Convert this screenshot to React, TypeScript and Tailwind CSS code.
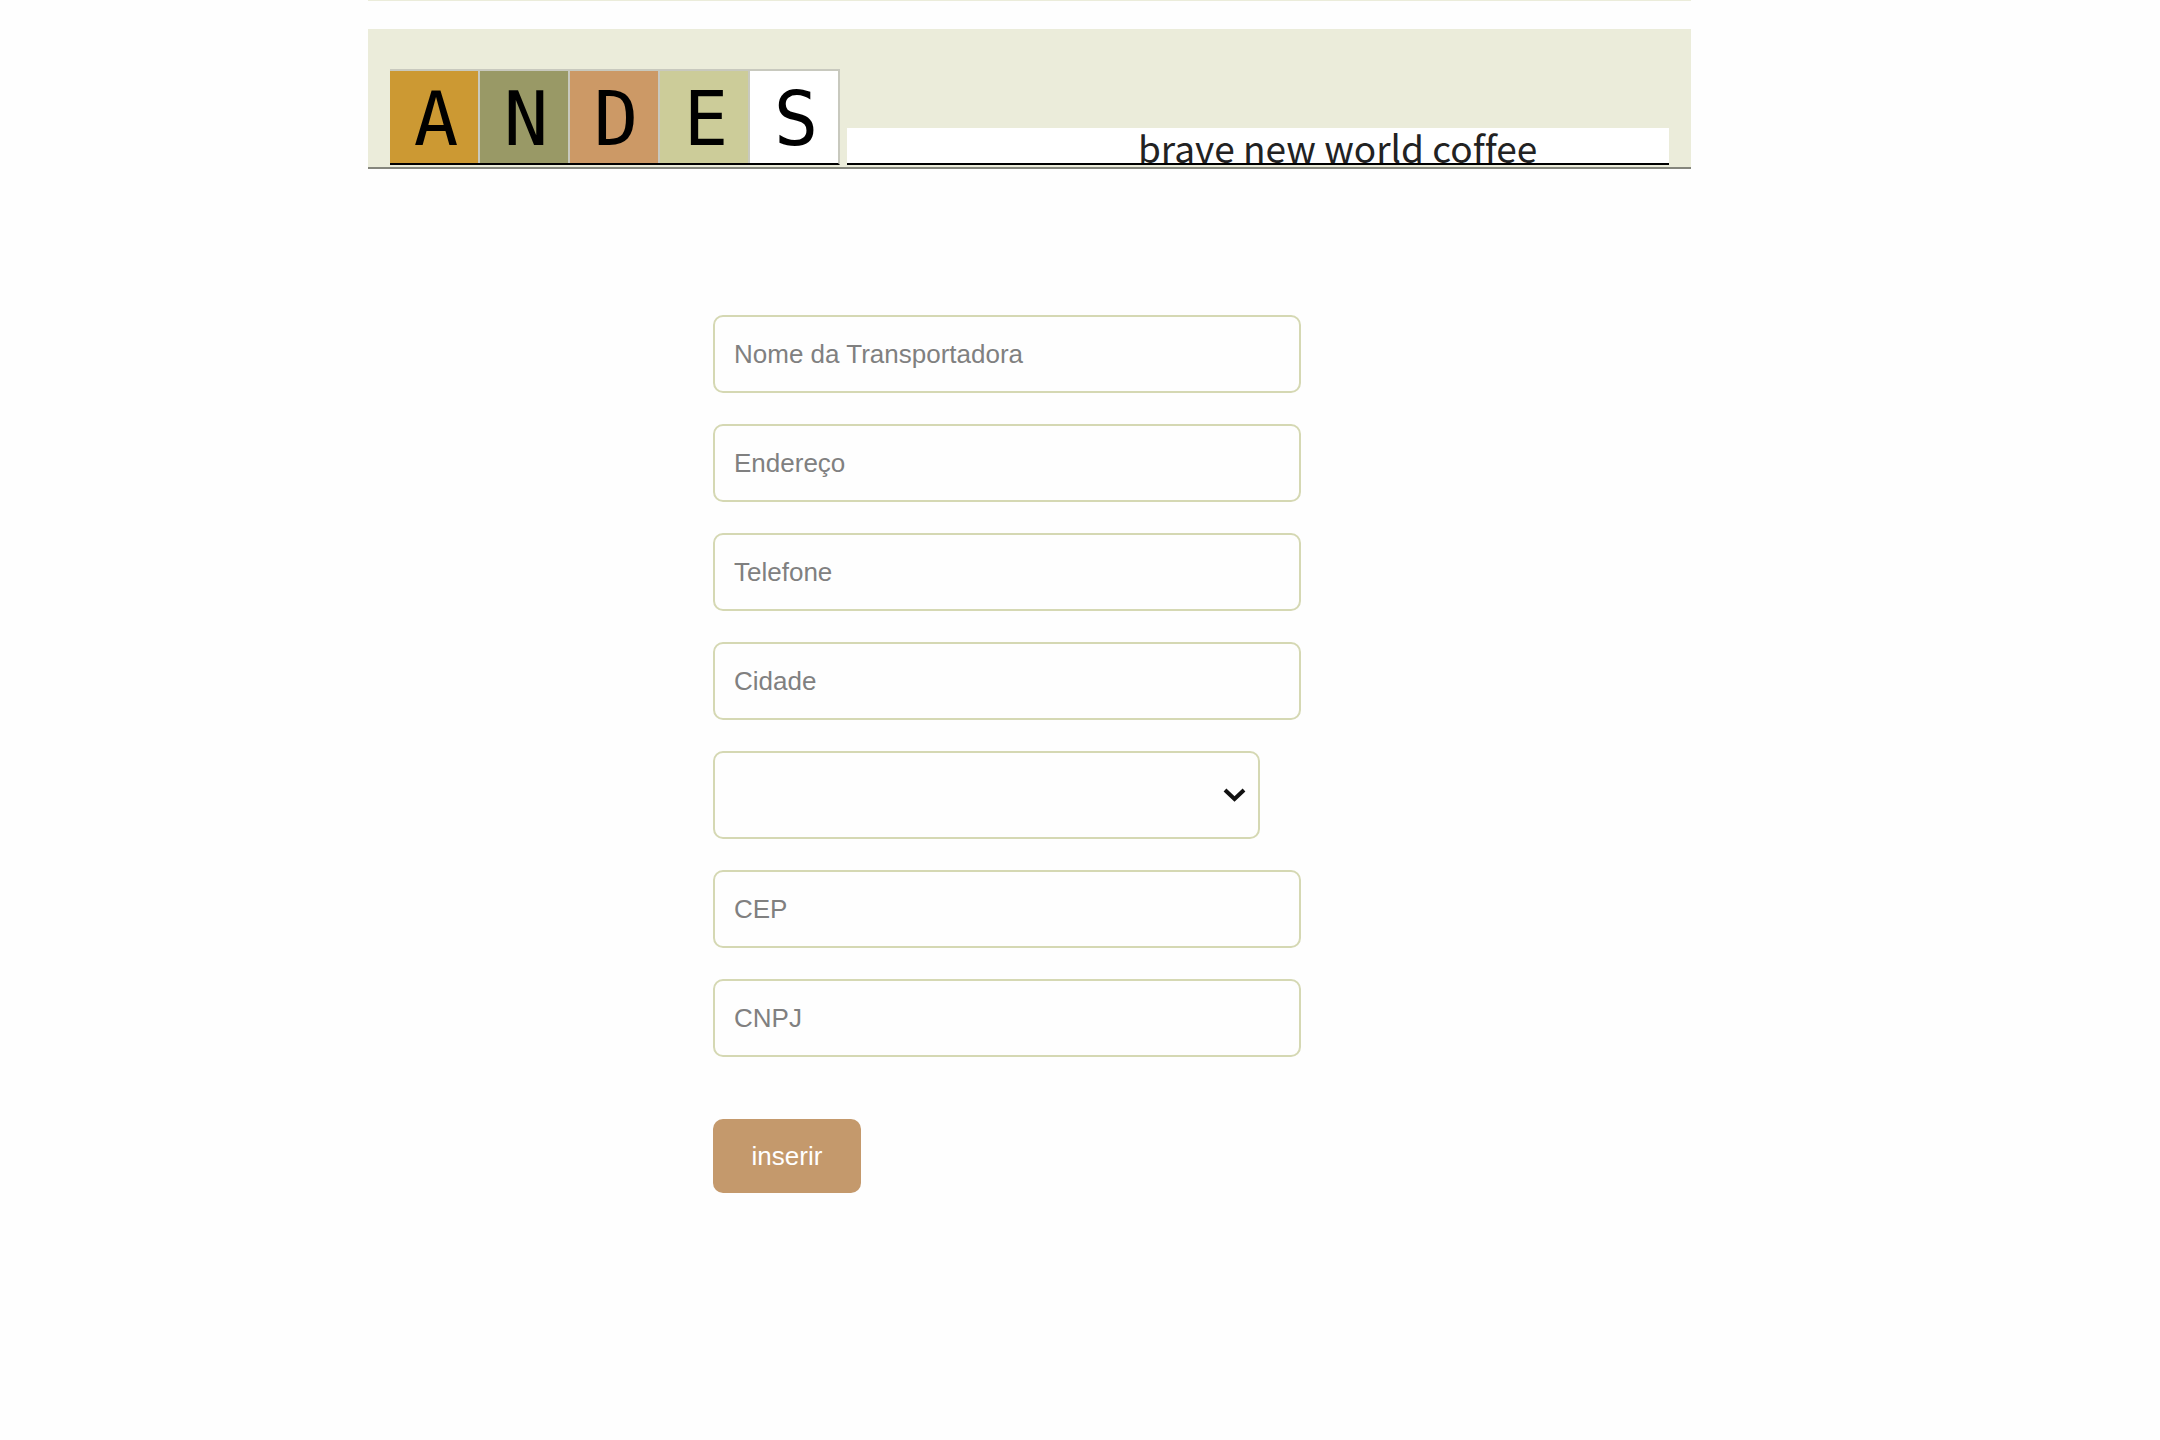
import React from "react";

const tiles = [
  { letter: "A", color: "bg-[#cc9933]" },
  { letter: "N", color: "bg-[#999966]" },
  { letter: "D", color: "bg-[#cc9966]" },
  { letter: "E", color: "bg-[#cccc99]" },
  { letter: "S", color: "bg-white" },
];

const box = "rounded-[10px] border-2 border-[#d5d8b3] bg-[#fefefe]";
const field =
  "h-[78px] w-full px-[19px] text-[26px] text-[#333333] placeholder:text-[#808080] placeholder:opacity-100";

function Field({ name, label }: { name: string; label: string }) {
  return <input type="text" name={name} aria-label={label} placeholder={label} className={`${box} ${field}`} />;
}

function Header() {
  return (
    <header className="flex items-end border-b-2 border-[#85867c] bg-[#ebecda] px-[22px] pt-10">
      <h1 className="mb-0.5 flex gap-0.5 border-t-2 border-r-2 border-b-2 border-t-[#c8c9be] border-r-[#c8c9be] border-b-black bg-[#c8c9be] font-['DejaVu_Sans_Mono',monospace] text-[74px] leading-none text-black">
        {tiles.map((tile) => (
          <span key={tile.letter} className={`flex h-[92px] w-[88px] items-center justify-center pt-1 pl-1 ${tile.color}`}>
            {tile.letter}
          </span>
        ))}
      </h1>
      <p className="mb-0.5 ml-[7px] h-[37px] flex-1 border-b-2 border-black bg-white pl-[291px] font-['Noto_Sans_CJK_JP',sans-serif] text-[37px] leading-[38px] whitespace-nowrap text-[#222222] [font-variant-ligatures:none]">
        brave new world coffee
      </p>
    </header>
  );
}

export default function App() {
  return (
    <div className="grid min-h-screen grid-cols-[368fr_1323fr_469fr] bg-[#fefefe] font-['Liberation_Sans',Arial,sans-serif]">
      <main className="col-start-2">
        <div className="mb-7 h-px bg-[#ebecda]" />
        <Header />
        <form className="mt-[146px] ml-[345px] flex max-w-[588px] flex-col items-start gap-[31px]">
          <Field name="nome" label="Nome da Transportadora" />
          <Field name="endereco" label="Endereço" />
          <Field name="telefone" label="Telefone" />
          <Field name="cidade" label="Cidade" />
          <div className="relative w-full max-w-[547px]">
            <select name="estado" aria-label="Estado" className={`${box} block h-22 w-full appearance-none px-[19px] text-[26px]`}>
              <option value=""></option>
            </select>
            <svg className="pointer-events-none absolute top-9 right-3.5 h-4 w-6" viewBox="0 0 24 16" fill="none" stroke="#111111" strokeWidth="4">
              <path d="M3 3 L12.500 12 L22 3" />
            </svg>
          </div>
          <Field name="cep" label="CEP" />
          <Field name="cnpj" label="CNPJ" />
          <button type="button" className="mt-[31px] h-[74px] w-[148px] rounded-[10px] bg-[#c4996c] text-[26px] text-white">
            inserir
          </button>
        </form>
      </main>
    </div>
  );
}
